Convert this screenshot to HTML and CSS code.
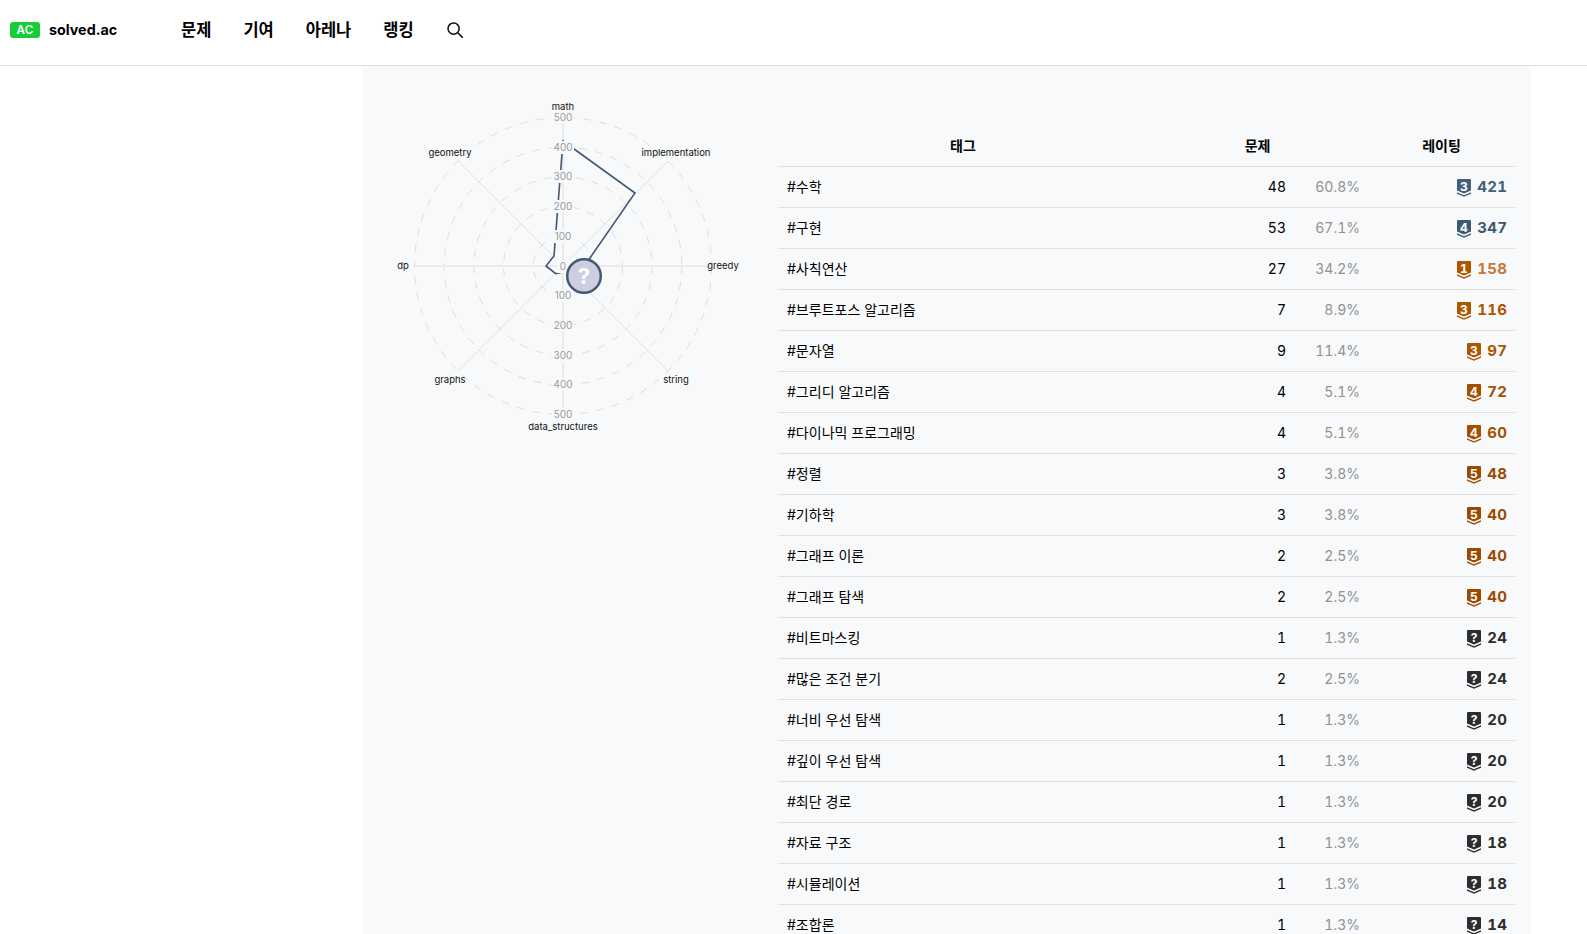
FILE: index.html
```html
<!DOCTYPE html>
<html lang="ko">
<head>
<meta charset="utf-8">
<title>solved.ac</title>
<link rel="stylesheet" href="styles.css">
</head>
<body>
<svg class="defs" width="0" height="0">
  <symbol id="shield" viewBox="0 0 14 18">
    <path d="M1 0h12a1 1 0 0 1 1 1v10.6l-7 3-7-3V1a1 1 0 0 1 1-1z"/>
    <path d="M0 13.2l7 3 7-3v1.5l-7 3-7-3z"/>
  </symbol>
</svg>
<header class="topbar">
  <a class="logo"><span class="logo-ac">AC</span><span class="logo-name">solved.ac</span></a>
  <nav class="nav">
    <a>문제</a>
    <a>기여</a>
    <a>아레나</a>
    <a>랭킹</a>
    <svg class="search" viewBox="0 0 16 16"><circle cx="6.6" cy="6.6" r="5.6"/><path d="M10.8 10.8L15.4 15.4"/></svg>
  </nav>
</header>
<main class="panel">
  <svg class="radar" viewBox="0 0 368 368" width="368" height="368">
    <g class="rings">
      <circle cx="184" cy="184" r="29.7"/>
      <circle cx="184" cy="184" r="59.4"/>
      <circle cx="184" cy="184" r="89.1"/>
      <circle cx="184" cy="184" r="118.8"/>
      <circle cx="184" cy="184" r="148.5"/>
    </g>
    <g class="spokes">
      <path d="M79 79L289 289M289 79L79 289"/>
    </g>
    <g class="axes">
      <path d="M184 35.5V332.5M35.5 184H332.5"/>
    </g>
    <polygon class="area" points="184,59 256,111 205.4,184 189,189 184,190 176.7,191.7 167,184 175,174"/>
    <g class="backdrops">
      <rect x="173" y="29" width="22" height="13"/>
      <rect x="173" y="59" width="22" height="13"/>
      <rect x="173" y="88" width="22" height="13"/>
      <rect x="173" y="118" width="22" height="13"/>
      <rect x="173" y="148" width="22" height="13"/>
      <rect x="178" y="178" width="12" height="13"/>
      <rect x="173" y="207" width="22" height="13"/>
      <rect x="173" y="237" width="22" height="13"/>
      <rect x="173" y="267" width="22" height="13"/>
      <rect x="173" y="296" width="22" height="13"/>
      <rect x="173" y="326" width="22" height="13"/>
    </g>
    <g class="ticks">
      <text x="184" y="39">500</text>
      <text x="184" y="69">400</text>
      <text x="184" y="98">300</text>
      <text x="184" y="128">200</text>
      <text x="184" y="158">100</text>
      <text x="184" y="188">0</text>
      <text x="184" y="217">100</text>
      <text x="184" y="247">200</text>
      <text x="184" y="277">300</text>
      <text x="184" y="306">400</text>
      <text x="184" y="336">500</text>
    </g>
    <g class="labels">
      <text x="184" y="27.5">math</text>
      <text x="71" y="73.5">geometry</text>
      <text x="297" y="73.5">implementation</text>
      <text x="24" y="187">dp</text>
      <text x="344" y="187">greedy</text>
      <text x="71" y="300.5">graphs</text>
      <text x="297" y="300.5">string</text>
      <text x="184" y="347.5">data_structures</text>
    </g>
    <circle class="dot" cx="205" cy="194" r="16.8"/>
    <text class="dot-mark" x="205" y="201.5">?</text>
  </svg>
  <table class="tags">
    <colgroup>
      <col class="c-tag"><col class="c-num"><col class="c-pct"><col class="c-rate">
    </colgroup>
    <thead>
      <tr><th>태그</th><th colspan="2">문제</th><th>레이팅</th></tr>
    </thead>
    <tbody>
      <tr><td>#수학</td><td class="num">48</td><td class="pct">60.8%</td><td><div class="rate s3"><svg class="tier" viewBox="0 0 14 18"><use href="#shield"/><text x="7" y="11.5">3</text></svg><b>421</b></div></td></tr>
      <tr><td>#구현</td><td class="num">53</td><td class="pct">67.1%</td><td><div class="rate s4"><svg class="tier" viewBox="0 0 14 18"><use href="#shield"/><text x="7" y="11.5">4</text></svg><b>347</b></div></td></tr>
      <tr><td>#사칙연산</td><td class="num">27</td><td class="pct">34.2%</td><td><div class="rate b1"><svg class="tier" viewBox="0 0 14 18"><use href="#shield"/><text x="7" y="11.5">1</text></svg><b>158</b></div></td></tr>
      <tr><td>#브루트포스 알고리즘</td><td class="num">7</td><td class="pct">8.9%</td><td><div class="rate b3"><svg class="tier" viewBox="0 0 14 18"><use href="#shield"/><text x="7" y="11.5">3</text></svg><b>116</b></div></td></tr>
      <tr><td>#문자열</td><td class="num">9</td><td class="pct">11.4%</td><td><div class="rate b3"><svg class="tier" viewBox="0 0 14 18"><use href="#shield"/><text x="7" y="11.5">3</text></svg><b>97</b></div></td></tr>
      <tr><td>#그리디 알고리즘</td><td class="num">4</td><td class="pct">5.1%</td><td><div class="rate b4"><svg class="tier" viewBox="0 0 14 18"><use href="#shield"/><text x="7" y="11.5">4</text></svg><b>72</b></div></td></tr>
      <tr><td>#다이나믹 프로그래밍</td><td class="num">4</td><td class="pct">5.1%</td><td><div class="rate b4"><svg class="tier" viewBox="0 0 14 18"><use href="#shield"/><text x="7" y="11.5">4</text></svg><b>60</b></div></td></tr>
      <tr><td>#정렬</td><td class="num">3</td><td class="pct">3.8%</td><td><div class="rate b5"><svg class="tier" viewBox="0 0 14 18"><use href="#shield"/><text x="7" y="11.5">5</text></svg><b>48</b></div></td></tr>
      <tr><td>#기하학</td><td class="num">3</td><td class="pct">3.8%</td><td><div class="rate b5"><svg class="tier" viewBox="0 0 14 18"><use href="#shield"/><text x="7" y="11.5">5</text></svg><b>40</b></div></td></tr>
      <tr><td>#그래프 이론</td><td class="num">2</td><td class="pct">2.5%</td><td><div class="rate b5"><svg class="tier" viewBox="0 0 14 18"><use href="#shield"/><text x="7" y="11.5">5</text></svg><b>40</b></div></td></tr>
      <tr><td>#그래프 탐색</td><td class="num">2</td><td class="pct">2.5%</td><td><div class="rate b5"><svg class="tier" viewBox="0 0 14 18"><use href="#shield"/><text x="7" y="11.5">5</text></svg><b>40</b></div></td></tr>
      <tr><td>#비트마스킹</td><td class="num">1</td><td class="pct">1.3%</td><td><div class="rate un"><svg class="tier" viewBox="0 0 14 18"><use href="#shield"/><text x="7" y="11.5">?</text></svg><b>24</b></div></td></tr>
      <tr><td>#많은 조건 분기</td><td class="num">2</td><td class="pct">2.5%</td><td><div class="rate un"><svg class="tier" viewBox="0 0 14 18"><use href="#shield"/><text x="7" y="11.5">?</text></svg><b>24</b></div></td></tr>
      <tr><td>#너비 우선 탐색</td><td class="num">1</td><td class="pct">1.3%</td><td><div class="rate un"><svg class="tier" viewBox="0 0 14 18"><use href="#shield"/><text x="7" y="11.5">?</text></svg><b>20</b></div></td></tr>
      <tr><td>#깊이 우선 탐색</td><td class="num">1</td><td class="pct">1.3%</td><td><div class="rate un"><svg class="tier" viewBox="0 0 14 18"><use href="#shield"/><text x="7" y="11.5">?</text></svg><b>20</b></div></td></tr>
      <tr><td>#최단 경로</td><td class="num">1</td><td class="pct">1.3%</td><td><div class="rate un"><svg class="tier" viewBox="0 0 14 18"><use href="#shield"/><text x="7" y="11.5">?</text></svg><b>20</b></div></td></tr>
      <tr><td>#자료 구조</td><td class="num">1</td><td class="pct">1.3%</td><td><div class="rate un"><svg class="tier" viewBox="0 0 14 18"><use href="#shield"/><text x="7" y="11.5">?</text></svg><b>18</b></div></td></tr>
      <tr><td>#시뮬레이션</td><td class="num">1</td><td class="pct">1.3%</td><td><div class="rate un"><svg class="tier" viewBox="0 0 14 18"><use href="#shield"/><text x="7" y="11.5">?</text></svg><b>18</b></div></td></tr>
      <tr><td>#조합론</td><td class="num">1</td><td class="pct">1.3%</td><td><div class="rate un"><svg class="tier" viewBox="0 0 14 18"><use href="#shield"/><text x="7" y="11.5">?</text></svg><b>14</b></div></td></tr>
    </tbody>
  </table>
</main>
</body>
</html>
```

FILE: styles.css
```css
* {box-sizing: border-box;}
html, body {height: 100%;}
body {margin: 0; overflow: hidden; background: #fff; color: #000; font-family: Inter, "Noto Sans CJK KR", sans-serif;}
.defs {display: block;}

.topbar {display: flex; align-items: center; height: 66px; padding: 0 0 6px 10px; border-bottom: 1px solid #dddfe0;}
.logo {display: flex; align-items: center; gap: 9px; width: 165px;}
.logo-ac {width: 30px; height: 16px; border-radius: 3px; background: #17ce3a; color: #fff; font-size: 11.5px; font-weight: 600; letter-spacing: 0.3px; line-height: 16px; text-align: center;}
.logo-name {font-size: 14.3px; font-weight: 700;}
.nav {display: flex; align-items: center; gap: 32px; padding-left: 6px;}
.nav a {margin-bottom: 2px; font-family: "Noto Sans CJK KR", sans-serif; font-size: 16.5px; font-weight: 700; line-height: 24px;}
.search {width: 16px; height: 16px; margin-left: 1px; fill: none; stroke: #111; stroke-width: 1.5; stroke-linecap: round;}

.panel {display: flex; gap: 32px; width: 1168px; min-height: 868px; margin-left: 363px; padding: 16px; background: #f8f9fa;}
.radar {flex: none;}
.rings circle {fill: none; stroke: #dcdee0; stroke-dasharray: 8 8;}
.spokes path {fill: none; stroke: #dddfe0;}
.axes path {fill: none; stroke: #eaebed; stroke-width: 2;}
.area {fill: none; stroke: #3f5a75; stroke-width: 1.6;}
.backdrops rect {fill: #f8f9fa;}
.ticks text {fill: #9a9a9a; font-size: 10px; text-anchor: middle;}
.labels text {fill: #111; font-size: 9.5px; text-anchor: middle;}
.dot {fill: #cdcfe0; stroke: #3f5a75; stroke-width: 2.5;}
.dot-mark {fill: #fff; font-size: 22px; font-weight: 700; text-anchor: middle;}

.tags {flex: none; width: 736px; height: max-content; margin-top: 43px; border-collapse: collapse; table-layout: fixed;}
.c-tag {width: 368px;}
.c-num {width: 147px;}
.c-pct {width: 74px;}
.c-rate {width: 147px;}
.tags th {height: 41px; padding: 0 8px; border-bottom: 1px solid #dddfe0; font-size: 14px; font-weight: 700; text-align: center;}
.tags td {height: 41px; padding: 0 8px 1px; border-bottom: 1px solid #dddfe0; font-size: 14px;}
.tags td.num {padding-bottom: 0; text-align: right; font-variant-numeric: tabular-nums;}
.tags td.pct {padding-bottom: 0; text-align: right; color: #919191; font-variant-numeric: tabular-nums;}
.rate {display: flex; align-items: center; justify-content: flex-end; gap: 6px; font-size: 15px; font-variant-numeric: tabular-nums; letter-spacing: 0.3px;}
.rate b {margin-right: -0.3px; font-weight: 700;}
.tier {width: 14px; height: 18px; margin-top: 3px; fill: currentColor;}
.tier text {fill: #fff; font-size: 12px; font-weight: 700; text-anchor: middle; letter-spacing: 0;}
.s3 {color: #435f7a;}
.s4 {color: #3d5a74;}
.b1 {color: #c67739;}
.b3 {color: #ad5600;}
.b4 {color: #a54f00;}
.b5 {color: #9d4900;}
.un {color: #2d2d2d;}
.b1 .tier {color: #ad5600;}
```
